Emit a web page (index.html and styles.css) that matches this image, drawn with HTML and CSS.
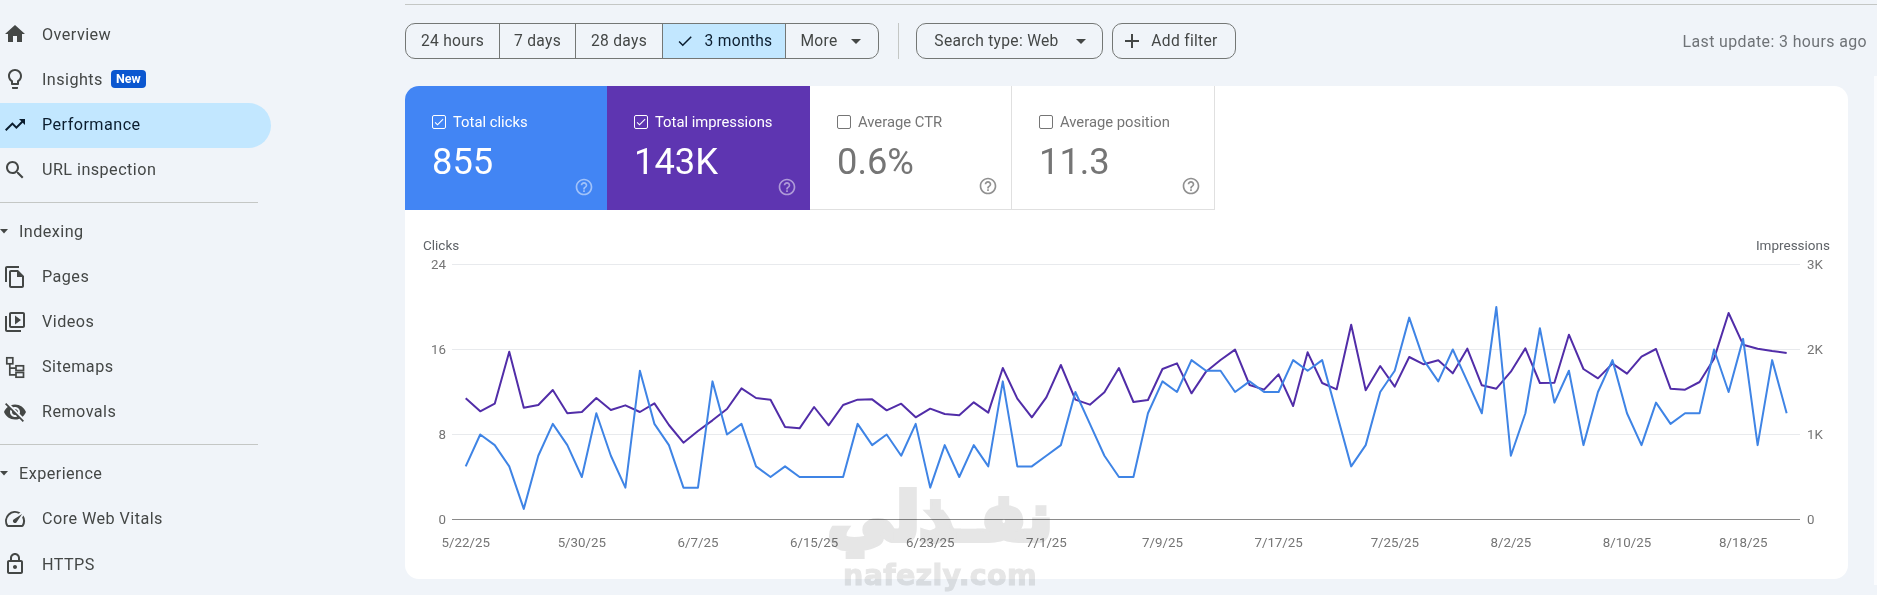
FILE: index.html
```html
<!DOCTYPE html>
<html lang="en">
<head>
<meta charset="utf-8">
<title>Performance</title>
<link rel="stylesheet" href="styles.css">
</head>
<body>
<svg class="defs" width="0" height="0" aria-hidden="true">
  <symbol id="i-drop" viewBox="0 0 24 24"><path d="M7 10l5 5 5-5z"/></symbol>
  <symbol id="i-help" viewBox="0 0 24 24"><path d="M11 18h2v-2h-2v2zm1-16C6.48 2 2 6.48 2 12s4.48 10 10 10 10-4.48 10-10S17.52 2 12 2zm0 18c-4.41 0-8-3.59-8-8s3.59-8 8-8 8 3.59 8 8-3.59 8-8 8zm0-14c-2.21 0-4 1.79-4 4h2c0-1.1.9-2 2-2s2 .9 2 2c0 2-3 1.75-3 5h2c0-2.25 3-2.5 3-5 0-2.21-1.79-4-4-4z"/></symbol>
  <symbol id="i-tick" viewBox="0 0 24 24"><path d="M9 16.17L4.83 12l-1.42 1.41L9 19 21 7l-1.41-1.41z"/></symbol>
</svg>
<div class="app">
  <aside class="sidebar">
    <a class="nav-item"><svg class="nav-icon" viewBox="0 0 24 24"><path d="M10 20v-6h4v6h5v-8h3L12 3 2 12h3v8z"/></svg><span>Overview</span></a>
    <a class="nav-item"><svg class="nav-icon" viewBox="0 0 24 24"><path d="M9 21c0 .55.45 1 1 1h4c.55 0 1-.45 1-1v-1H9v1zm3-19C8.14 2 5 5.14 5 9c0 2.38 1.19 4.47 3 5.74V17c0 .55.45 1 1 1h6c.55 0 1-.45 1-1v-2.26c1.81-1.27 3-3.36 3-5.74 0-3.86-3.14-7-7-7zm2.85 11.1l-.85.6V16h-4v-2.3l-.85-.6C7.8 12.16 7 10.63 7 9c0-2.76 2.24-5 5-5s5 2.24 5 5c0 1.63-.8 3.16-2.15 4.1z"/></svg><span>Insights</span><span class="badge">New</span></a>
    <a class="nav-item active"><svg class="nav-icon" viewBox="0 0 24 24"><path d="M16 6l2.29 2.29-4.88 4.88-4-4L2 16.59 3.41 18l6-6 4 4 6.3-6.29L22 12V6z"/></svg><span>Performance</span></a>
    <a class="nav-item"><svg class="nav-icon" viewBox="0 0 24 24"><path d="M15.5 14h-.79l-.28-.27C15.41 12.59 16 11.11 16 9.5 16 5.91 13.09 3 9.5 3S3 5.91 3 9.5 5.91 16 9.5 16c1.61 0 3.09-.59 4.23-1.57l.27.28v.79l5 4.99L20.49 19l-4.99-5zm-6 0C7.01 14 5 11.99 5 9.5S7.01 5 9.5 5 14 7.01 14 9.5 11.99 14 9.5 14z"/></svg><span>URL inspection</span></a>
    <hr class="nav-rule">
    <div class="nav-group"><svg class="group-arrow" viewBox="0 0 10 5"><path d="M0 0h8L4 4.5z"/></svg><span>Indexing</span></div>
    <a class="nav-item"><svg class="nav-icon" viewBox="0 0 24 24"><path d="M16 1H4c-1.1 0-2 .9-2 2v14h2V3h12V1zm-1 4H8c-1.1 0-1.99.9-1.99 2L6 21c0 1.1.89 2 1.99 2H19c1.1 0 2-.9 2-2V11l-6-6zM8 21V7h6v5h5v9H8z"/></svg><span>Pages</span></a>
    <a class="nav-item"><svg class="nav-icon" viewBox="0 0 24 24"><path d="M4 6H2v14c0 1.1.9 2 2 2h14v-2H4V6zm16-4H8c-1.1 0-2 .9-2 2v12c0 1.1.9 2 2 2h12c1.1 0 2-.9 2-2V4c0-1.1-.9-2-2-2zm0 14H8V4h12v12zM12 5.5v9l6-4.5z"/></svg><span>Videos</span></a>
    <a class="nav-item"><svg class="nav-icon nav-icon-outline" viewBox="0 0 24 24"><rect x="3.800" y="2.800" width="6" height="6"/><rect x="13" y="10.800" width="7.500" height="4.700"/><rect x="13" y="17.500" width="7.500" height="4.700"/><path d="M6.800 8.800v11h6.200M6.800 13.100h6.200"/></svg><span>Sitemaps</span></a>
    <a class="nav-item"><svg class="nav-icon" viewBox="0 0 24 24"><path d="M12 7c2.760 0 5 2.240 5 5 0 .65-.13 1.260-.36 1.830l2.920 2.920c1.510-1.260 2.700-2.890 3.430-4.750-1.730-4.390-6-7.500-11-7.500-1.400 0-2.740.25-3.980.7l2.160 2.160C10.740 7.130 11.350 7 12 7zM2 4.270l2.280 2.280.46.46C3.080 8.300 1.780 10.020 1 12c1.730 4.390 6 7.500 11 7.500 1.550 0 3.030-.3 4.380-.84l.42.42L19.730 22 21 20.730 3.270 3 2 4.270zM7.530 9.800l1.550 1.550c-.05.21-.08.43-.08.65 0 1.660 1.340 3 3 3 .22 0 .44-.03.65-.08l1.550 1.550c-.67.33-1.410.53-2.200.53-2.760 0-5-2.240-5-5 0-.79.2-1.530.53-2.200zm4.310-.78l3.150 3.150.02-.16c0-1.660-1.340-3-3-3l-.17.01z"/></svg><span>Removals</span></a>
    <hr class="nav-rule">
    <div class="nav-group"><svg class="group-arrow" viewBox="0 0 10 5"><path d="M0 0h8L4 4.500z"/></svg><span>Experience</span></div>
    <a class="nav-item"><svg class="nav-icon" viewBox="0 0 24 24"><path d="M20.380 8.570l-1.230 1.850a8 8 0 0 1-.22 7.580H5.070A8 8 0 0 1 15.580 6.850l1.850-1.230A10 10 0 0 0 3.350 19a2 2 0 0 0 1.720 1h13.850a2 2 0 0 0 1.740-1 10 10 0 0 0-.27-10.440zm-9.790 6.840a2 2 0 0 0 2.830 0l5.660-8.490-8.490 5.660a2 2 0 0 0 0 2.830z"/></svg><span>Core Web Vitals</span></a>
    <a class="nav-item"><svg class="nav-icon" viewBox="0 0 24 24"><path d="M18 8h-1V6c0-2.760-2.240-5-5-5S7 3.240 7 6v2H6c-1.100 0-2 .9-2 2v10c0 1.100.9 2 2 2h12c1.100 0 2-.9 2-2V10c0-1.100-.9-2-2-2zM9 6c0-1.660 1.340-3 3-3s3 1.340 3 3v2H9V6zm9 14H6V10h12v10zm-6-3c1.100 0 2-.9 2-2s-.9-2-2-2-2 .9-2 2 .9 2 2 2z"/></svg><span>HTTPS</span></a>
  </aside>

  <main class="main">
    <div class="top-rule"></div>
    <div class="toolbar">
      <div class="segments">
        <button class="segment">24 hours</button>
        <button class="segment">7 days</button>
        <button class="segment">28 days</button>
        <button class="segment selected"><svg class="tick-icon" viewBox="0 0 24 24"><use href="#i-tick"/></svg>3 months</button>
        <button class="segment">More<svg class="drop-icon" viewBox="0 0 24 24"><use href="#i-drop"/></svg></button>
      </div>
      <div class="tool-divider"></div>
      <button class="chip chip-search">Search type: Web<svg class="drop-icon" viewBox="0 0 24 24"><use href="#i-drop"/></svg></button>
      <button class="chip chip-filter"><svg class="add-icon" viewBox="0 0 24 24"><path d="M19 13h-6v6h-2v-6H5v-2h6V5h2v6h6v2z"/></svg>Add filter</button>
      <div class="last-update">Last update: 3 hours ago</div>
    </div>

    <div class="content">
      <section class="card">
        <div class="scorecards">
          <div class="score score-clicks">
            <div class="score-label"><span class="box"><svg viewBox="0 0 24 24"><use href="#i-tick"/></svg></span>Total clicks</div>
            <div class="score-value">855</div>
            <svg class="help" viewBox="0 0 24 24"><use href="#i-help"/></svg>
          </div>
          <div class="score score-impr">
            <div class="score-label"><span class="box"><svg viewBox="0 0 24 24"><use href="#i-tick"/></svg></span>Total impressions</div>
            <div class="score-value">143K</div>
            <svg class="help" viewBox="0 0 24 24"><use href="#i-help"/></svg>
          </div>
          <div class="score score-ctr">
            <div class="score-label"><span class="box"></span>Average CTR</div>
            <div class="score-value">0.6%</div>
            <svg class="help" viewBox="0 0 24 24"><use href="#i-help"/></svg>
          </div>
          <div class="score score-pos">
            <div class="score-label"><span class="box"></span>Average position</div>
            <div class="score-value">11.3</div>
            <svg class="help" viewBox="0 0 24 24"><use href="#i-help"/></svg>
          </div>
        </div>

        <svg class="chart" viewBox="405 210 1443 369">
          <text class="axis-title" x="423" y="249.500">Clicks</text>
          <text class="axis-title" x="1830" y="249.500" text-anchor="end">Impressions</text>

          <line class="grid" x1="452" x2="1800" y1="264.500" y2="264.500"/>
          <line class="grid" x1="452" x2="1800" y1="349.500" y2="349.500"/>
          <line class="grid" x1="452" x2="1800" y1="434.500" y2="434.500"/>
          <line class="axis" x1="452" x2="1800" y1="519.500" y2="519.500"/>

          <text class="tick" x="446" y="268.500" text-anchor="end">24</text>
          <text class="tick" x="446" y="353.500" text-anchor="end">16</text>
          <text class="tick" x="446" y="438.500" text-anchor="end">8</text>
          <text class="tick" x="446" y="523.500" text-anchor="end">0</text>
          <text class="tick" x="1807" y="268.500">3K</text>
          <text class="tick" x="1807" y="353.500">2K</text>
          <text class="tick" x="1807" y="438.500">1K</text>
          <text class="tick" x="1807" y="523.500">0</text>

          <text class="tick" text-anchor="middle" y="547" x="465.700">5/22/25</text>
          <text class="tick" text-anchor="middle" y="547" x="581.800">5/30/25</text>
          <text class="tick" text-anchor="middle" y="547" x="698">6/7/25</text>
          <text class="tick" text-anchor="middle" y="547" x="814.100">6/15/25</text>
          <text class="tick" text-anchor="middle" y="547" x="930.200">6/23/25</text>
          <text class="tick" text-anchor="middle" y="547" x="1046.400">7/1/25</text>
          <text class="tick" text-anchor="middle" y="547" x="1162.500">7/9/25</text>
          <text class="tick" text-anchor="middle" y="547" x="1278.600">7/17/25</text>
          <text class="tick" text-anchor="middle" y="547" x="1394.800">7/25/25</text>
          <text class="tick" text-anchor="middle" y="547" x="1510.900">8/2/25</text>
          <text class="tick" text-anchor="middle" y="547" x="1627">8/10/25</text>
          <text class="tick" text-anchor="middle" y="547" x="1743.200">8/18/25</text>

          <g transform="translate(465.700 225) scale(14.516 .33333)">
            <polyline class="line line-impr" points="0,520 1,559 2,536 3,380 4,548 5,540 6,495 7,565 8,561 9,519 10,555 11,541 12,561 13,535 14,600 15,653 16,618 17,586 18,552 19,490 20,519 21,524 22,606 23,610 24,546 25,601 26,540 27,524 28,523 29,556 30,536 31,577 32,551 33,567 34,571 35,532 36,563 37,429 38,521 39,577 40,517 41,420 42,524 43,539 44,502 45,429 46,531 47,525 48,432 49,415 50,505 51,440 52,405 53,374 54,480 55,494 56,448 57,543 58,382 59,474 60,493 61,299 62,496 63,423 64,485 65,396 66,418 67,406 68,445 69,371 70,481 71,491 72,440 73,370 74,474 75,473 76,329 77,432 78,460 79,416 80,446 81,395 82,372 83,491 84,494 85,471 86,401 87,264 88,359 89,371 90,378 91,384"/>
          </g>
          <g transform="translate(465.700 519.500) scale(14.516 -10.625)">
            <polyline class="line line-clicks" points="0,5 1,8 2,7 3,5 4,1 5,6 6,9 7,7 8,4 9,10 10,6 11,3 12,14 13,9 14,7 15,3 16,3 17,13 18,8 19,9 20,5 21,4 22,5 23,4 24,4 25,4 26,4 27,9 28,7 29,8 30,6 31,9 32,3 33,7 34,4 35,7 36,5 37,13 38,5 39,5 40,6 41,7 42,12 43,9 44,6 45,4 46,4 47,10 48,13 49,12 50,15 51,14 52,14 53,12 54,13 55,12 56,12 57,15 58,14 59,15 60,10 61,5 62,7 63,12 64,14 65,19 66,15 67,13 68,16 69,13 70,10 71,20 72,6 73,10 74,18 75,11 76,14 77,7 78,12 79,15 80,10 81,7 82,11 83,9 84,10 85,10 86,16 87,12 88,17 89,7 90,15 91,10"/>
          </g>
        </svg>
      </section>
      <div class="edge-strip"></div>
    </div>
  </main>
</div>
<div class="watermark" lang="ar" dir="rtl">
  <div class="wm-arabic">نفـذلي</div>
  <div class="wm-latin" dir="ltr" lang="en">nafezly.com</div>
</div>
</body>
</html>
```
FILE: styles.css
```css
* { box-sizing: border-box; }

html, body {
  margin: 0;
  height: 595px;
  overflow: hidden;
}

body {
  position: relative;
  background: #f0f4f9;
  font-family: Roboto, "Liberation Sans", sans-serif;
  color: #444746;
}

.defs { position: absolute; }

.app {
  display: flex;
  height: 595px;
}

/* Sidebar */
.sidebar {
  flex: 0 0 405px;
  padding-top: 12.800px;
}

.nav-item {
  display: flex;
  align-items: center;
  width: 271px;
  height: 45.100px;
  padding: 0 0 2px 3px;
  font-size: 16.200px;
  letter-spacing: .45px;
  color: #444746;
  border-radius: 0 23px 23px 0;
}

.nav-item.active {
  background: #c2e7ff;
  color: #0b1d2e;
}

.nav-icon {
  flex: 0 0 24px;
  width: 24px;
  height: 24px;
  margin-right: 15px;
  fill: currentColor;
}

.nav-icon-outline {
  fill: none;
  stroke: currentColor;
  stroke-width: 1.700;
}

.badge {
  margin-left: 8px;
  padding: 0 5px;
  height: 18px;
  line-height: 18px;
  border-radius: 4px;
  background: #0b57d0;
  color: #fff;
  font-size: 12.500px;
  font-weight: 700;
  letter-spacing: 0;
}

.nav-rule {
  width: 258px;
  margin: 8.750px 0 6.200px;
  border: 0;
  border-top: 1px solid #c4c7c5;
}

.nav-group {
  display: flex;
  align-items: center;
  height: 45px;
  margin-bottom: 1px;
  font-size: 16.200px;
  letter-spacing: .45px;
}

.group-arrow {
  width: 10px;
  height: 5px;
  margin-right: 9px;
  fill: #444746;
}

/* Main column */
.main {
  flex: 1;
  min-width: 0;
  padding-top: 4px;
}

.top-rule {
  height: 1px;
  background: #c4c7c5;
}

.toolbar {
  display: flex;
  align-items: center;
  height: 36px;
  margin-top: 18px;
  padding-right: 10px;
}

.segments {
  display: grid;
  grid-template-columns: 93px 76px 87px 123px 93px;
  height: 36px;
  border: 1px solid #747775;
  border-radius: 10px;
  overflow: hidden;
}

button {
  font: inherit;
  color: #444746;
  font-size: 15.600px;
  letter-spacing: .3px;
  background: none;
}

.segment {
  display: flex;
  align-items: center;
  justify-content: center;
  padding: 0;
  border: 0;
  border-left: 1px solid #747775;
}

.segment:first-child { border-left: 0; }

.segment.selected {
  background: #c2e7ff;
  color: #0b1d2e;
}

.tick-icon {
  width: 18px;
  height: 18px;
  margin-right: 11px;
  fill: currentColor;
}

.drop-icon {
  width: 24px;
  height: 24px;
  margin-left: 6px;
  margin-right: -4px;
  fill: #444746;
}

.chip .drop-icon {
  margin-left: 10px;
  margin-right: -8px;
}

.tool-divider {
  width: 1px;
  height: 36px;
  margin: 0 17px 0 19px;
  background: #c4c7c5;
}

.chip {
  display: flex;
  align-items: center;
  justify-content: center;
  height: 36px;
  padding: 0;
  border: 1px solid #747775;
  border-radius: 10px;
}

.chip-search { width: 187px; margin-right: 9px; }
.chip-filter { width: 124px; }

.add-icon {
  width: 24px;
  height: 24px;
  margin-right: 7px;
  margin-left: -10px;
  fill: #444746;
}

.last-update {
  margin-left: auto;
  font-size: 15.900px;
  letter-spacing: .4px;
  color: #6f7377;
}

.content {
  display: flex;
  margin-top: 27px;
}

.edge-strip {
  flex: 0 0 3px;
  height: 509px;
  margin-left: 26px;
  margin-top: -10px;
  background: #fbfcfe;
}

/* Card */
.card {
  flex: 0 0 1443px;
  height: 493px;
  background: #fff;
  border-radius: 14px;
  overflow: hidden;
}

.scorecards {
  display: flex;
  height: 124px;
}

.score {
  position: relative;
  width: 202px;
  padding: 26px 0 0 27px;
  color: #fff;
}

.score-clicks { background: #4285f4; }
.score-impr { background: #5e35b1; width: 203px; }

.score-ctr, .score-pos {
  color: #757575;
  border-right: 1px solid #e0e0e0;
  border-bottom: 1px solid #e0e0e0;
}

.score-pos { width: 203px; }

.score-label {
  display: flex;
  align-items: center;
  height: 20px;
  font-size: 14.800px;
}

.box {
  display: flex;
  flex: 0 0 14px;
  width: 14px;
  height: 14px;
  margin-right: 7px;
  border: 1.300px solid currentColor;
  border-radius: 2px;
  fill: currentColor;
}

.box svg {
  width: 12px;
  height: 12px;
}

.score-value {
  margin-top: 9px;
  height: 42px;
  line-height: 42px;
  font-size: 36.300px;
}

.help {
  position: absolute;
  right: 13px;
  bottom: 13px;
  width: 20px;
  height: 20px;
  fill: currentColor;
  opacity: .5;
}

.score-ctr .help, .score-pos .help { opacity: .8; }

/* Chart */
.chart {
  display: block;
  width: 1443px;
  height: 369px;
}

.axis-title {
  font-size: 13.500px;
  fill: #5f6368;
}

.tick {
  font-size: 13.300px;
  fill: #757575;
}

.grid { stroke: #e8eaed; stroke-width: 1; }
.axis { stroke: #8a8a8a; stroke-width: 1; }

.line {
  fill: none;
  stroke-width: 2;
  stroke-linejoin: round;
  vector-effect: non-scaling-stroke;
}

.line-clicks { stroke: #3f84e5; }
.line-impr { stroke: #512da8; }

/* Watermark */
.watermark {
  position: absolute;
  left: 820px;
  top: 476px;
  width: 240px;
  color: #e6e6e6;
  text-align: center;
  pointer-events: none;
  mix-blend-mode: multiply;
}

.wm-arabic {
  font-family: "DejaVu Sans", sans-serif;
  font-weight: 700;
  font-size: 66px;
  line-height: 84px;
  -webkit-text-stroke: 6px #e6e6e6;
  paint-order: stroke fill;
  stroke-linejoin: round;
}

.wm-latin {
  font-family: "DejaVu Sans", sans-serif;
  font-weight: 700;
  font-size: 28.500px;
  line-height: 32px;
  letter-spacing: .3px;
  -webkit-text-stroke: 1px #e6e6e6;
}
```
